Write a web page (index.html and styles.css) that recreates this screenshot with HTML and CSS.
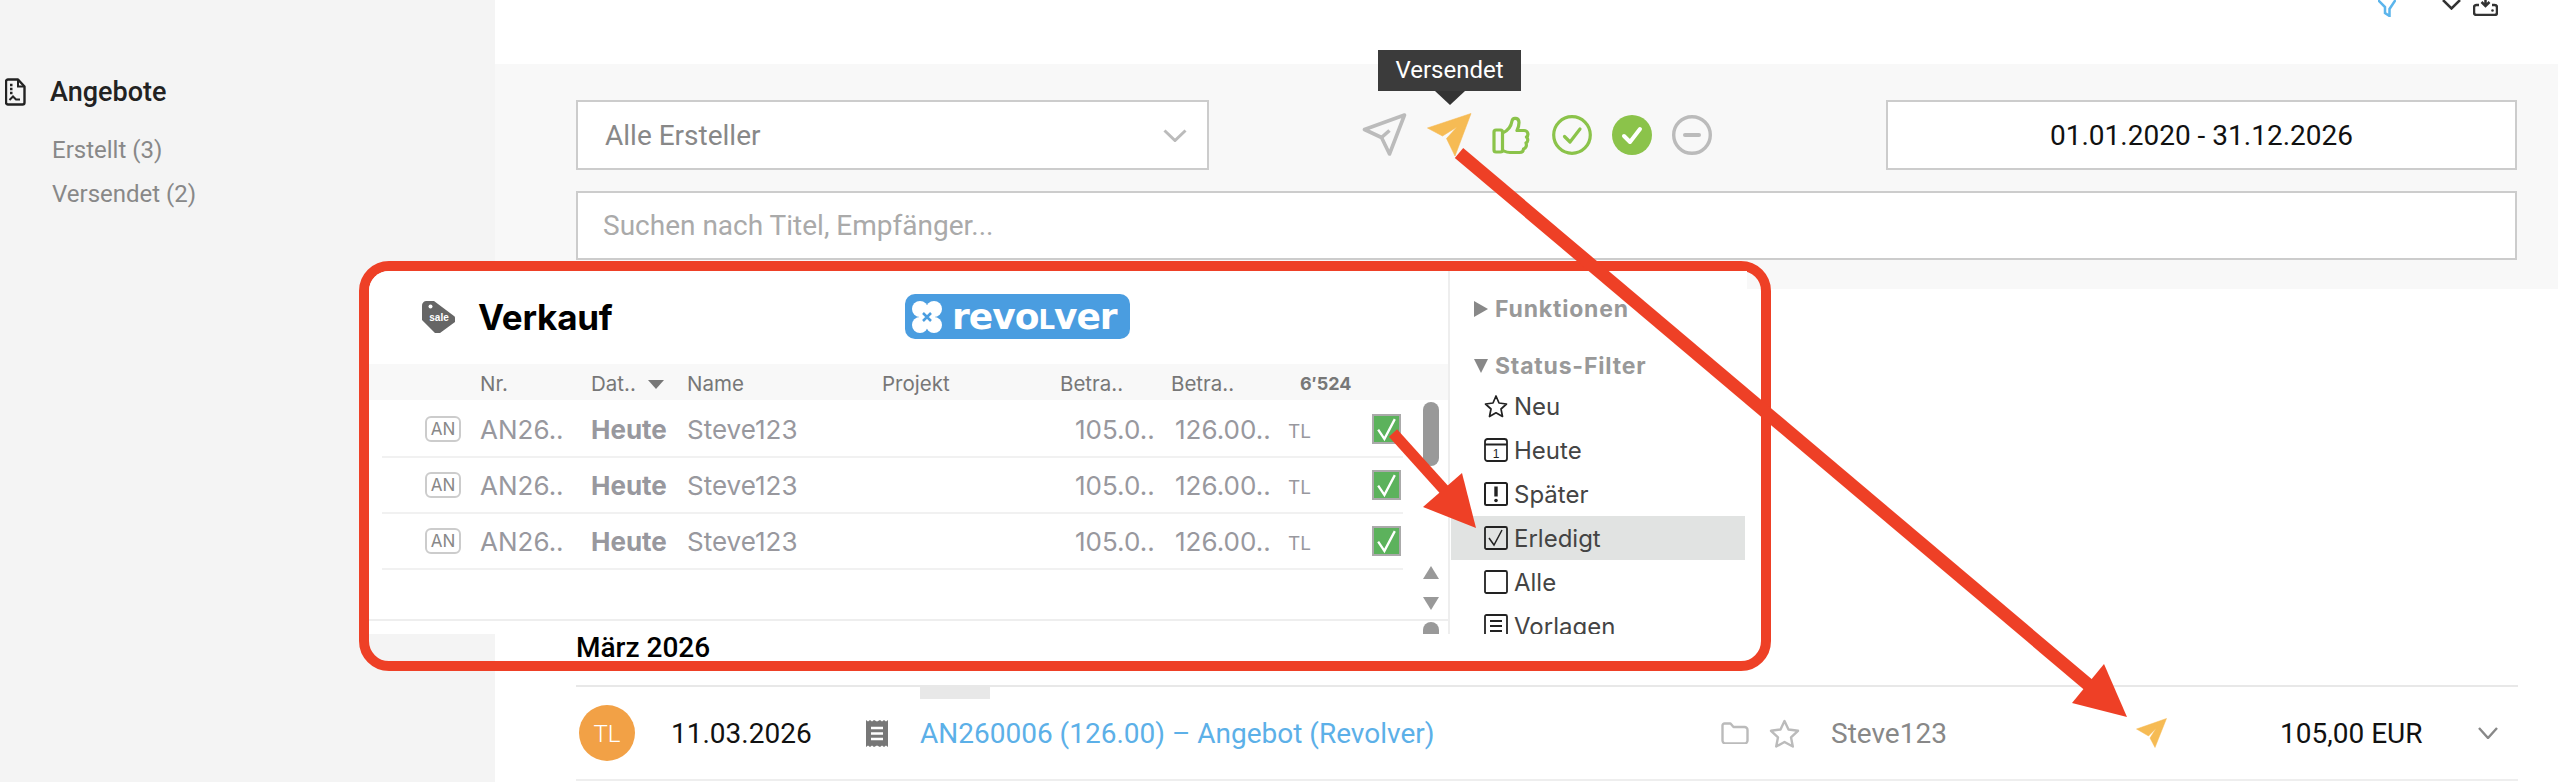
FILE: index.html
```html
<!DOCTYPE html>
<html lang="de">
<head>
    <meta charset="utf-8">
    <title>Angebote</title>
    <link rel="stylesheet" href="styles.css">
</head>
<body>
<div class="page">
    <aside class="sidebar">
        <div class="nav-title">
            <svg class="nav-icon" viewBox="0 0 21 28"><path d="M3 1.500h10l6.500 7v16a2 2 0 0 1-2 2H3a2 2 0 0 1-2-2v-21a2 2 0 0 1 2-2z" fill="none" stroke="#222" stroke-width="2.400" stroke-linejoin="round"/><path d="M13 2v6.500h6" fill="none" stroke="#222" stroke-width="2"/><path d="M5 7h2.500M5 11h2.500M5 15h2.500" stroke="#222" stroke-width="2.400"/><path d="M4.500 22l3.500-3.500 3 3h4" fill="none" stroke="#222" stroke-width="2"/></svg>
            <span>Angebote</span>
        </div>
        <a class="nav-link">Erstellt (3)</a>
        <a class="nav-link">Versendet (2)</a>
    </aside>

    <main class="main">
        <div class="topbar">
            <svg class="top-filter" viewBox="0 0 18 17"><path d="M0 0l7 7v6l4.500 3V9l6-9" fill="none" stroke="#5cb5ec" stroke-width="2.500"/></svg>
            <svg class="top-chevron" viewBox="0 0 19 10"><path d="M1 0l8.500 8.500L18 0" fill="none" stroke="#333" stroke-width="2.500"/></svg>
            <svg class="top-save" viewBox="0 0 25 16"><path d="M12.500 0v5M8.500 2l4 4 4-4" fill="none" stroke="#333" stroke-width="2.500"/><path d="M6 5H3.500A2.500 2.500 0 0 0 1 7.500v5A2.500 2.500 0 0 0 3.500 15h18a2.500 2.500 0 0 0 2.500-2.500v-5A2.500 2.500 0 0 0 21.500 5H19" fill="none" stroke="#333" stroke-width="2.500"/><circle cx="19.500" cy="10.500" r="1.300" fill="#333"/></svg>
        </div>

        <section class="filters">
            <div class="filter-row">
                <div class="field select">
                    <span>Alle Ersteller</span>
                    <svg class="select-arrow" viewBox="0 0 24 13"><path d="M1.500 1.500L12 11.500 22.500 1.500" fill="none" stroke="#bbb" stroke-width="3"/></svg>
                </div>
                <div class="status-icons">
                    <div class="tooltip">Versendet</div>
                    <svg class="ico-send" viewBox="0 0 45 44"><path d="M2.500 16.500L42.500 2 27.500 41 19.500 24.500z" fill="none" stroke="#bbb" stroke-width="3.600" stroke-linejoin="round"/><path d="M19.500 24.500l8-7" stroke="#bbb" stroke-width="3.600"/></svg>
                    <svg class="ico-send" viewBox="0 0 45 44"><path d="M0.500 15L44 0.500 28 43 19.500 25.500 30 14 15.500 23z" fill="#f6bb54" stroke="#f6bb54" stroke-width="0.600" stroke-linejoin="round"/></svg>
                    <svg class="ico-status" viewBox="0 0 40 40"><rect x="2" y="15" width="8.500" height="22" rx="2" fill="none" stroke="#8bc34a" stroke-width="3.200"/><path d="M10.500 18c5-2 8.500-6 9.500-12 .8-4 7-3.500 7 1.500 0 3-1 6-2 8h7c4 0 5 4.500 2.500 6.500 2 2 1.500 5-.5 6 1 2.500 0 5-2.500 6 0 2.500-2 3.500-4 3.500H18c-3 0-5-1-7.500-2" fill="none" stroke="#8bc34a" stroke-width="3.200" stroke-linejoin="round"/></svg>
                    <svg class="ico-status" viewBox="0 0 40 40"><circle cx="20" cy="20" r="18.300" fill="none" stroke="#8bc34a" stroke-width="3.200"/><path d="M12.500 21.500l5.500 5.500 10-13" fill="none" stroke="#8bc34a" stroke-width="3.200" stroke-linecap="round" stroke-linejoin="round"/></svg>
                    <svg class="ico-status" viewBox="0 0 40 40"><circle cx="20" cy="20" r="20" fill="#8bc34a"/><path d="M12 21l6 6 10-13" fill="none" stroke="#fff" stroke-width="4" stroke-linecap="round" stroke-linejoin="round"/></svg>
                    <svg class="ico-status" viewBox="0 0 40 40"><circle cx="20" cy="20" r="18.300" fill="none" stroke="#bbb" stroke-width="3.400"/><path d="M13 20h14" stroke="#bbb" stroke-width="4" stroke-linecap="round"/></svg>
                </div>
                <div class="field date">01.01.2020 - 31.12.2026</div>
            </div>
            <div class="field search">Suchen nach Titel, Empfänger...</div>
        </section>

        <section class="list">
            <h2 class="month">März 2026</h2>
            <div class="offer">
                <div class="chip"></div>
                <div class="avatar">TL</div>
                <div class="offer-date">11.03.2026</div>
                <svg class="ico-receipt" viewBox="0 0 22 27"><path d="M0 0l2 1.500L4 0l2 1.500L8 0l3 1.500L14 0l2 1.500L18 0l2 1.500L22 0v27l-2-1.500-2 1.500-2-1.500-2 1.500-3-1.500L8 27l-2-1.500L4 27l-2-1.500L0 27z" fill="#777"/><path d="M5 8h12M5 13.500h12M5 19h12" stroke="#fff" stroke-width="2.500"/></svg>
                <a class="offer-link">AN260006 (126.00) – Angebot (Revolver)</a>
                <svg class="ico-folder" viewBox="0 0 28 22"><path d="M1.500 3.500a2 2 0 0 1 2-2h6l3 3.500h11a3 3 0 0 1 3 3v10.500a3 3 0 0 1-3 3h-19a3 3 0 0 1-3-3z" fill="none" stroke="#bbb" stroke-width="2.400" stroke-linejoin="round"/></svg>
                <svg class="ico-star" viewBox="0 0 31 29"><path d="M15.500 2l4 8.500 9.500 1.300-7 6.500 1.800 9.200-8.300-4.500-8.300 4.500 1.800-9.200-7-6.500 9.500-1.300z" fill="none" stroke="#bbb" stroke-width="2.400" stroke-linejoin="round"/></svg>
                <div class="offer-user">Steve123</div>
                <svg class="ico-send-small" viewBox="0 0 31 30"><path d="M0.500 11L30.500 0.500 19 29.500 14 20 20 10.500 12.500 18z" fill="#f6bb54" stroke="#f6bb54" stroke-width="0.500" stroke-linejoin="round"/></svg>
                <div class="offer-amount">105,00 EUR</div>
                <svg class="ico-chevron" viewBox="0 0 20 12"><path d="M1 1l9 10 9-10" fill="none" stroke="#888" stroke-width="2.400"/></svg>
            </div>
        </section>
    </main>

    <div class="callout">
        <div class="shot">
            <div class="shot-main">
                <div class="shot-head">
                    <svg class="ico-tag" viewBox="0 0 35 34"><path d="M5 1h8l20 15a2 2 0 0 1 1 2v4L19 33h-5L1 20V6a5 5 0 0 1 4-5z" fill="#666"/><circle cx="9.500" cy="6.500" r="2" fill="#fff"/><text class="tag-text" x="18" y="21" text-anchor="middle">sale</text></svg>
                    <span class="shot-title">Verkauf</span>
                    <div class="brand">
                        <svg class="brand-mark" viewBox="0 0 30 34"><circle cx="8" cy="9" r="8" fill="#fff"/><circle cx="22" cy="9" r="8" fill="#fff"/><circle cx="8" cy="25" r="8" fill="#fff"/><circle cx="22" cy="25" r="8" fill="#fff"/><rect x="7" y="8" width="16" height="18" fill="#fff"/><path d="M11 13l8 8M19 13l-8 8" stroke="#4a9de0" stroke-width="2.500"/></svg>
                        <span>revo<span class="brand-l">L</span>ver</span>
                    </div>
                </div>
                <div class="grid grid-head">
                    <span class="col-2">Nr.</span>
                    <span>Dat.. <i class="sort"></i></span>
                    <span>Name</span>
                    <span>Projekt</span>
                    <span>Betra..</span>
                    <span>Betra..</span>
                    <span class="count">6′524</span>
                </div>
                <div class="grid grid-row">
                    <span class="kind">AN</span><span>AN26..</span><b>Heute</b><span>Steve123</span><span></span><span class="pad-net">105.0..</span><span class="pad-gross">126.00..</span><span class="owner">TL</span><span class="check"><svg viewBox="0 0 24 26"><path d="M4 13l6 9L20 3" fill="none" stroke="#fff" stroke-width="2.200"/></svg></span>
                </div>
                <div class="grid grid-row">
                    <span class="kind">AN</span><span>AN26..</span><b>Heute</b><span>Steve123</span><span></span><span class="pad-net">105.0..</span><span class="pad-gross">126.00..</span><span class="owner">TL</span><span class="check"><svg viewBox="0 0 24 26"><path d="M4 13l6 9L20 3" fill="none" stroke="#fff" stroke-width="2.200"/></svg></span>
                </div>
                <div class="grid grid-row">
                    <span class="kind">AN</span><span>AN26..</span><b>Heute</b><span>Steve123</span><span></span><span class="pad-net">105.0..</span><span class="pad-gross">126.00..</span><span class="owner">TL</span><span class="check"><svg viewBox="0 0 24 26"><path d="M4 13l6 9L20 3" fill="none" stroke="#fff" stroke-width="2.200"/></svg></span>
                </div>
                <div class="shot-foot"></div>
                <div class="scroller">
                    <div class="thumb"></div>
                    <i class="step-up"></i>
                    <i class="step-down"></i>
                    <div class="thumb-end"></div>
                </div>
            </div>
            <div class="shot-side">
                <div class="side-head first"><i class="tri-right"></i>Funktionen</div>
                <div class="side-head"><i class="tri-down"></i>Status-Filter</div>
                <div class="side-item">
                    <svg viewBox="0 0 24 24"><path d="M12 2l3 7 7.500 1-5.500 5 1.500 7.500-6.500-3.700L5.500 22.500 7 15 1.500 10 9 9z" fill="none" stroke="#222" stroke-width="1.700" stroke-linejoin="round"/></svg>Neu
                </div>
                <div class="side-item">
                    <svg viewBox="0 0 24 24"><rect x="1" y="1" width="22" height="22" rx="2.500" fill="none" stroke="#222" stroke-width="1.800"/><path d="M1 6.500h22" stroke="#222" stroke-width="1.800"/><text class="cal-text" x="12" y="20" text-anchor="middle">1</text></svg>Heute
                </div>
                <div class="side-item">
                    <svg viewBox="0 0 24 24"><rect x="1" y="1" width="22" height="22" rx="1.500" fill="none" stroke="#222" stroke-width="2"/><path d="M12 4.500v10" stroke="#222" stroke-width="3.400"/><circle cx="12" cy="18.500" r="1.800" fill="#222"/></svg>Später
                </div>
                <div class="side-item active">
                    <svg viewBox="0 0 24 24"><rect x="1" y="1" width="22" height="22" rx="1.500" fill="none" stroke="#222" stroke-width="1.800"/><path d="M5 12l5 7L18 4" fill="none" stroke="#222" stroke-width="1.500"/></svg>Erledigt
                </div>
                <div class="side-item">
                    <svg viewBox="0 0 24 24"><rect x="1" y="1" width="22" height="22" rx="1.500" fill="none" stroke="#222" stroke-width="1.800"/></svg>Alle
                </div>
                <div class="side-item">
                    <svg viewBox="0 0 24 24"><rect x="1" y="1" width="22" height="22" rx="1.500" fill="none" stroke="#222" stroke-width="1.800"/><path d="M6 7h12M6 12h12M6 17h12" stroke="#222" stroke-width="1.800"/></svg>Vorlagen
                </div>
            </div>
        </div>
    </div>

    <svg class="arrows" viewBox="0 0 2558 782">
        <path d="M1459 153L2091 687" fill="none" stroke="#ee4026" stroke-width="13"/>
        <path d="M2127 717L2104 664 2072 703z" fill="#ee4026"/>
        <path d="M1393 433L1448 494" fill="none" stroke="#ee4026" stroke-width="11"/>
        <path d="M1476 528L1462 473 1423 507z" fill="#ee4026"/>
    </svg>
</div>
</body>
</html>
```

FILE: styles.css
```css
body {
    margin: 0;
    background-color: white;
    font-family: Roboto, "Noto Sans", sans-serif;
}
.page {
    position: relative;
    display: flex;
    width: 2558px;
    height: 782px;
    overflow: hidden;
}
svg {
    display: block;
    flex: none;
}

/* sidebar */
.sidebar {
    width: 495px;
    flex: none;
    background-color: #f4f4f4;
    padding-top: 77px;
    box-sizing: border-box;
}
.nav-title {
    display: flex;
    align-items: center;
    padding-left: 5px;
    height: 30px;
    margin-bottom: 28px;
    font-size: 27px;
    font-weight: 500;
    color: #222;
}
.nav-icon {
    width: 21px;
    height: 28px;
    margin-right: 24px;
}
.nav-link {
    display: block;
    margin-left: 52px;
    height: 44px;
    line-height: 30px;
    font-size: 24px;
    color: #888;
}

/* main column */
.main {
    flex: 1;
}
.topbar {
    display: flex;
    justify-content: flex-end;
    align-items: flex-start;
    height: 64px;
    padding-right: 60px;
    box-sizing: border-box;
}
.top-filter {
    width: 18px;
    height: 17px;
    margin-right: 46px;
}
.top-chevron {
    width: 19px;
    height: 10px;
    margin-right: 12px;
}
.top-save {
    width: 25px;
    height: 16px;
}

.filters {
    background-color: #f8f8f8;
    padding: 36px 41px 29px 81px;
}
.filter-row {
    display: flex;
    align-items: center;
    margin-bottom: 21px;
}
.field {
    box-sizing: border-box;
    border: 2px solid #ccc;
    background-color: white;
    height: 70px;
    font-size: 28px;
    display: flex;
    align-items: center;
}
.select {
    width: 633px;
    padding: 0 20px 0 27px;
    color: #888;
    justify-content: space-between;
}
.select-arrow {
    width: 24px;
    height: 13px;
}
.date {
    width: 631px;
    margin-left: auto;
    justify-content: center;
    color: #111;
}
.search {
    height: 69px;
    padding-left: 25px;
    color: #aaa;
}
.status-icons {
    position: relative;
    display: flex;
    align-items: center;
    gap: 20px;
    margin-left: 153px;
}
.ico-send {
    width: 45px;
    height: 44px;
}
.ico-status {
    width: 40px;
    height: 40px;
}
.tooltip {
    position: absolute;
    left: 16px;
    top: -63px;
    width: 143px;
    height: 41px;
    line-height: 41px;
    text-align: center;
    background-color: #3b3b3b;
    color: white;
    font-size: 24px;
}
.tooltip::after {
    content: "";
    position: absolute;
    left: 57px;
    top: 41px;
    border-left: 15px solid transparent;
    border-right: 15px solid transparent;
    border-top: 14px solid #333;
}

/* list */
.list {
    padding: 342px 40px 0 81px;
}
.month {
    margin: 0 0 20px;
    height: 34px;
    line-height: 34px;
    font-size: 28px;
    font-weight: 500;
    color: black;
}
.offer {
    position: relative;
    display: grid;
    grid-template-columns: 95px 195px 54px 801px 48px 62px 305px 144px 198px 20px;
    align-items: center;
    height: 96px;
    box-sizing: border-box;
    border-top: 2px solid #e8e8e8;
    border-bottom: 2px solid #eee;
    font-size: 28px;
}
.chip {
    position: absolute;
    left: 344px;
    top: 0;
    width: 70px;
    height: 12px;
    background-color: #e8e8e8;
}
.avatar {
    width: 56px;
    height: 56px;
    margin-left: 3px;
    border-radius: 50%;
    background-color: #f2a146;
    color: white;
    font-size: 24px;
    font-weight: 300;
    line-height: 58px;
    text-align: center;
}
.offer-date,
.offer-amount {
    color: #111;
}
.ico-receipt {
    width: 22px;
    height: 27px;
}
.offer-link {
    color: #5cb0e8;
}
.ico-folder {
    width: 28px;
    height: 22px;
}
.ico-star {
    width: 31px;
    height: 29px;
}
.offer-user {
    color: #888;
}
.ico-send-small {
    width: 31px;
    height: 30px;
}
.ico-chevron {
    width: 20px;
    height: 12px;
}

/* pasted app screenshot, with its red frame */
.callout {
    position: absolute;
    left: 359px;
    top: 261px;
    width: 1412px;
    height: 410px;
    box-sizing: border-box;
    border: 10px solid #ee4026;
    border-radius: 30px;
}
.shot {
    display: flex;
    width: 1378px;
    height: 363px;
    overflow: hidden;
    background-color: white;
    border-top-left-radius: 20px;
    font-family: Inter, "Liberation Sans", sans-serif;
}
.shot-main {
    position: relative;
    width: 1079px;
    flex: none;
    border-right: 2px solid #eee;
    display: flex;
    flex-direction: column;
}
.shot-head {
    display: flex;
    align-items: center;
    height: 93px;
    flex: none;
    padding-left: 52px;
    padding-bottom: 2px;
    box-sizing: border-box;
}
.ico-tag {
    width: 35px;
    height: 34px;
    margin-right: 22px;
}
.tag-text {
    font-family: "Liberation Sans", sans-serif;
    font-size: 10px;
    font-weight: bold;
    fill: white;
}
.shot-title {
    width: 427px;
    font-size: 35px;
    font-weight: 700;
    letter-spacing: -0.2px;
    color: black;
}
.brand {
    display: flex;
    align-items: center;
    gap: 10px;
    box-sizing: border-box;
    width: 225px;
    height: 45px;
    padding-left: 7px;
    background-color: #4a9de0;
    border-radius: 10px;
    color: white;
    font-family: "DejaVu Sans", sans-serif;
    font-size: 36px;
    font-weight: bold;
    letter-spacing: -1px;
}
.brand-mark {
    width: 30px;
    height: 34px;
}
.brand-l {
    font-size: 26px;
}
.grid {
    display: grid;
    grid-template-columns: 98px 111px 96px 195px 178px 111px 117px 84px 30px;
    align-items: center;
    padding-left: 13px;
    box-sizing: border-box;
}
.grid-head {
    height: 36px;
    flex: none;
    margin-bottom: 2px;
    padding-top: 2px;
    background-color: #f8f8f8;
    color: #777;
    font-size: 20.500px;
}
.col-2 {
    grid-column-start: 2;
}
.sort {
    display: inline-block;
    margin-left: 6px;
    vertical-align: 2px;
    border-left: 8px solid transparent;
    border-right: 8px solid transparent;
    border-top: 9px solid #777;
}
.count {
    padding-left: 12px;
    font-size: 18px;
    font-weight: 700;
}
.grid-row {
    height: 56px;
    flex: none;
    width: 1021px;
    margin-left: 13px;
    padding-left: 0;
    border-bottom: 2px solid #f1f1f1;
    color: #98989e;
    font-size: 26px;
}
.kind {
    justify-self: start;
    box-sizing: border-box;
    width: 36px;
    height: 26px;
    margin-left: 43px;
    border: 2px solid #ccc;
    border-radius: 6px;
    text-align: center;
    line-height: 22px;
    font-size: 17px;
    color: #888;
}
.pad-net {
    padding-left: 15px;
}
.pad-gross {
    padding-left: 4px;
}
.owner {
    font-size: 19px;
    padding-top: 4px;
}
.check {
    box-sizing: border-box;
    width: 29px;
    height: 30px;
    background-color: #5cb25c;
    border: 2px solid #aaa;
}
.shot-foot {
    margin-top: 49px;
    height: 2px;
    background-color: #eee;
}
.scroller {
    position: absolute;
    left: 1054px;
    top: 131px;
    width: 16px;
    height: 232px;
    overflow: hidden;
}
.thumb {
    height: 64px;
    border-radius: 8px;
    background-color: #999;
    margin-bottom: 100px;
}
.step-up,
.step-down {
    display: block;
    width: 0;
    border-left: 8px solid transparent;
    border-right: 8px solid transparent;
}
.step-up {
    border-bottom: 13px solid #999;
    margin-bottom: 18px;
}
.step-down {
    border-top: 13px solid #999;
    margin-bottom: 12px;
}
.thumb-end {
    height: 24px;
    border-radius: 8px;
    background-color: #999;
}
.shot-side {
    flex: 1;
    padding-left: 1px;
    min-width: 0;
}
.side-head {
    display: flex;
    align-items: center;
    height: 36px;
    padding-left: 23px;
    margin-top: 21px;
    font-size: 23px;
    font-weight: 700;
    color: #999;
    letter-spacing: 0.8px;
}
.side-head.first {
    margin-top: 20px;
}
.tri-right {
    margin-right: 7px;
    border-top: 8px solid transparent;
    border-bottom: 8px solid transparent;
    border-left: 14px solid #888;
}
.tri-down {
    margin-right: 7px;
    border-left: 7px solid transparent;
    border-right: 7px solid transparent;
    border-top: 14px solid #888;
}
.side-item {
    display: flex;
    align-items: center;
    height: 44px;
    width: 294px;
    padding-left: 33px;
    box-sizing: border-box;
    font-size: 24px;
    color: #444;
}
.side-item svg {
    width: 24px;
    height: 24px;
    margin-right: 6px;
}
.side-item.active {
    background-color: #e1e3e2;
}
.cal-text {
    font-family: "Liberation Sans", sans-serif;
    font-size: 12px;
    fill: #222;
}

.arrows {
    position: absolute;
    left: 0;
    top: 0;
    width: 2558px;
    height: 782px;
}
```
